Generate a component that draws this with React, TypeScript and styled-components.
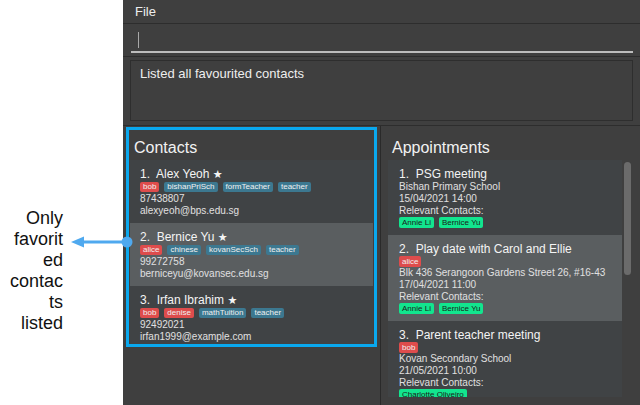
import styled, { createGlobalStyle } from "styled-components";

const GlobalStyle = createGlobalStyle`
  html, body {
    margin: 0;
    padding: 0;
    background: #ffffff;
  }
  body {
    font-family: "Liberation Sans", Arial, sans-serif;
  }
`;

const Page = styled.div`
  position: relative;
  display: flex;
  width: 640px;
  height: 405px;
  overflow: hidden;
  background: #ffffff;
`;

const Annotation = styled.div`
  width: 123px;
  flex-shrink: 0;
  box-sizing: border-box;
  padding: 208px 60px 0 0;
  font-size: 18px;
  line-height: 21px;
  color: #111;
  text-align: right;
`;

const Arrow = styled.svg`
  position: absolute;
  left: 68px;
  top: 233px;
`;

const Window = styled.div`
  flex: 1;
  display: flex;
  flex-direction: column;
  background: #3f3f3f;
  color: #ececec;
`;

const MenuBar = styled.div`
  height: 23px;
  padding-left: 12px;
  font-size: 13px;
  line-height: 23px;
  color: #eeeeee;
  border-bottom: 1px solid #2d2d2d;
`;

const CommandBar = styled.div`
  height: 33px;
  box-sizing: border-box;
  padding: 5px 7px 0 8px;
  border-bottom: 1px solid #2d2d2d;
`;

const CommandField = styled.div`
  height: 22px;
  display: flex;
  align-items: center;
  padding-left: 7px;
  border-bottom: 2px solid #bdbdbd;
`;

const Caret = styled.div`
  width: 1px;
  height: 16px;
  background: #a8a8a8;
`;

const ResultArea = styled.div`
  height: 69px;
  box-sizing: border-box;
  padding: 3px 7px 4px 7px;
  border-bottom: 1px solid #2d2d2d;
`;

const ResultBox = styled.div`
  height: 100%;
  box-sizing: border-box;
  border: 1px solid #2e2e2e;
  padding: 5px 9px;
  font-size: 13px;
  line-height: 15px;
  color: #eeeeee;
`;

const Panels = styled.div`
  flex: 1;
  display: flex;
  min-height: 0;
`;

const LeftPanel = styled.div`
  width: 258px;
  flex-shrink: 0;
  box-sizing: border-box;
  padding: 1px 3px;
  border-right: 1px solid #2a2a2a;
`;

const Highlight = styled.div`
  width: 251px;
  height: 220px;
  box-sizing: border-box;
  border: 3px solid #0aa8ee;
  display: flex;
  flex-direction: column;
`;

const PanelTitle = styled.div<{ $left: number }>`
  padding: 8px 0 2px ${(p) => p.$left}px;
  font-size: 16px;
  line-height: 20px;
  color: #f2f2f2;
`;

const ContactList = styled.div`
  flex: 1;
  margin: 0 1px 0 1px;
  overflow: hidden;
  background: #404345;
`;

const Card = styled.div<{ $selected?: boolean }>`
  box-sizing: border-box;
  padding: 7px 0 6px 10px;
  background: ${(p) => (p.$selected ? "#5a5e60" : "#404345")};
`;

const CardName = styled.div`
  font-size: 12px;
  line-height: 15px;
  color: #f4f4f4;
  white-space: pre;
`;

const Star = styled.span`
  font-family: "DejaVu Sans", sans-serif;
  font-size: 11px;
`;

const TagRow = styled.div<{ $height: number }>`
  display: flex;
  gap: 5px;
  height: ${(p) => p.$height}px;
`;

const Tag = styled.span<{ $kind: "red" | "blue" | "green"; $height: number }>`
  height: ${(p) => p.$height}px;
  line-height: ${(p) => p.$height}px;
  padding: 0 3px;
  border-radius: 2px;
  font-size: 8px;
  color: ${(p) => (p.$kind === "green" ? "#1b1b1b" : "#f0f0f0")};
  background: ${(p) =>
    p.$kind === "red" ? "#de4c4c" : p.$kind === "green" ? "#12e58e" : "#3c7890"};
`;

const Detail = styled.div<{ $gap?: number }>`
  margin-top: ${(p) => p.$gap ?? 0}px;
  font-size: 10px;
  line-height: 12px;
  color: #e0e0e0;
  white-space: nowrap;
`;

const RightPanel = styled.div`
  flex: 1;
  display: flex;
  flex-direction: column;
  box-sizing: border-box;
  padding: 4px 0 8px 7px;
  min-width: 0;
`;

const ListWrap = styled.div`
  flex: 1;
  display: flex;
  min-height: 0;
`;

const ApptList = styled.div`
  width: 234px;
  overflow: hidden;
  background: #404345;
`;

const ScrollTrack = styled.div`
  padding: 2px 0 0 2px;
`;

const Thumb = styled.div`
  width: 7px;
  height: 113px;
  border-radius: 4px;
  background: #6b6b6b;
`;

const ApptCard = styled.div<{ $selected?: boolean }>`
  padding: 7px 0 7px 11px;
  background: ${(p) => (p.$selected ? "#5a5e60" : "#404345")};
`;

const ApptName = styled.div`
  font-size: 12px;
  line-height: 14px;
  color: #f4f4f4;
  white-space: pre;
`;

type TagKind = "red" | "blue";

const contacts: {
  name: string;
  tags: { label: string; kind: TagKind }[];
  phone: string;
  email: string;
}[] = [
  {
    name: "Alex Yeoh",
    tags: [
      { label: "bob", kind: "red" },
      { label: "bishanPriSch", kind: "blue" },
      { label: "formTeacher", kind: "blue" },
      { label: "teacher", kind: "blue" },
    ],
    phone: "87438807",
    email: "alexyeoh@bps.edu.sg",
  },
  {
    name: "Bernice Yu",
    tags: [
      { label: "alice", kind: "red" },
      { label: "chinese", kind: "blue" },
      { label: "kovanSecSch", kind: "blue" },
      { label: "teacher", kind: "blue" },
    ],
    phone: "99272758",
    email: "berniceyu@kovansec.edu.sg",
  },
  {
    name: "Irfan Ibrahim",
    tags: [
      { label: "bob", kind: "red" },
      { label: "denise", kind: "red" },
      { label: "mathTuition", kind: "blue" },
      { label: "teacher", kind: "blue" },
    ],
    phone: "92492021",
    email: "irfan1999@example.com",
  },
];

const appointments: {
  name: string;
  tags: string[];
  address: string;
  date: string;
  contacts: string[];
}[] = [
  {
    name: "PSG meeting",
    tags: [],
    address: "Bishan Primary School",
    date: "15/04/2021 14:00",
    contacts: ["Annie Li", "Bernice Yu"],
  },
  {
    name: "Play date with Carol and Ellie",
    tags: ["alice"],
    address: "Blk 436 Serangoon Gardens Street 26, #16-43",
    date: "17/04/2021 11:00",
    contacts: ["Annie Li", "Bernice Yu"],
  },
  {
    name: "Parent teacher meeting",
    tags: ["bob"],
    address: "Kovan Secondary School",
    date: "21/05/2021 10:00",
    contacts: ["Charlotte Oliveiro"],
  },
];

export default function App() {
  return (
    <>
      <GlobalStyle />
      <Page>
        <Annotation>
          Only
          <br />
          favorit
          <br />
          ed
          <br />
          contac
          <br />
          ts
          <br />
          listed
        </Annotation>

        <Window>
          <MenuBar>File</MenuBar>
          <CommandBar>
            <CommandField>
              <Caret />
            </CommandField>
          </CommandBar>
          <ResultArea>
            <ResultBox>Listed all favourited contacts</ResultBox>
          </ResultArea>

          <Panels>
            <LeftPanel>
              <Highlight>
                <PanelTitle $left={5}>Contacts</PanelTitle>
                <ContactList>
                  {contacts.map((c, i) => (
                    <Card key={c.name} $selected={i === 1}>
                      <CardName>
                        {`${i + 1}.  ${c.name} `}
                        <Star>★</Star>
                      </CardName>
                      <TagRow $height={10}>
                        {c.tags.map((t) => (
                          <Tag key={t.label} $kind={t.kind} $height={10}>
                            {t.label}
                          </Tag>
                        ))}
                      </TagRow>
                      <Detail $gap={1}>{c.phone}</Detail>
                      <Detail>{c.email}</Detail>
                    </Card>
                  ))}
                </ContactList>
              </Highlight>
            </LeftPanel>

            <RightPanel>
              <PanelTitle $left={4}>Appointments</PanelTitle>
              <ListWrap>
                <ApptList>
                  {appointments.map((a, i) => (
                    <ApptCard key={a.name} $selected={i === 1}>
                      <ApptName>{`${i + 1}.  ${a.name}`}</ApptName>
                      {a.tags.length > 0 && (
                        <TagRow $height={11}>
                          {a.tags.map((t) => (
                            <Tag key={t} $kind="red" $height={11}>
                              {t}
                            </Tag>
                          ))}
                        </TagRow>
                      )}
                      <Detail>{a.address}</Detail>
                      <Detail>{a.date}</Detail>
                      <Detail>Relevant Contacts:</Detail>
                      <TagRow $height={11}>
                        {a.contacts.map((n) => (
                          <Tag key={n} $kind="green" $height={11}>
                            {n}
                          </Tag>
                        ))}
                      </TagRow>
                    </ApptCard>
                  ))}
                </ApptList>
                <ScrollTrack>
                  <Thumb />
                </ScrollTrack>
              </ListWrap>
            </RightPanel>
          </Panels>
        </Window>

        <Arrow width="66" height="18" viewBox="0 0 66 18">
          <line x1="12" y1="9" x2="59" y2="9" stroke="#4fa9ef" strokeWidth="3" />
          <polygon points="3,9 16,3.5 16,14.5" fill="#4fa9ef" />
          <circle cx="59" cy="9" r="5.5" fill="#4fa9ef" />
        </Arrow>
      </Page>
    </>
  );
}
